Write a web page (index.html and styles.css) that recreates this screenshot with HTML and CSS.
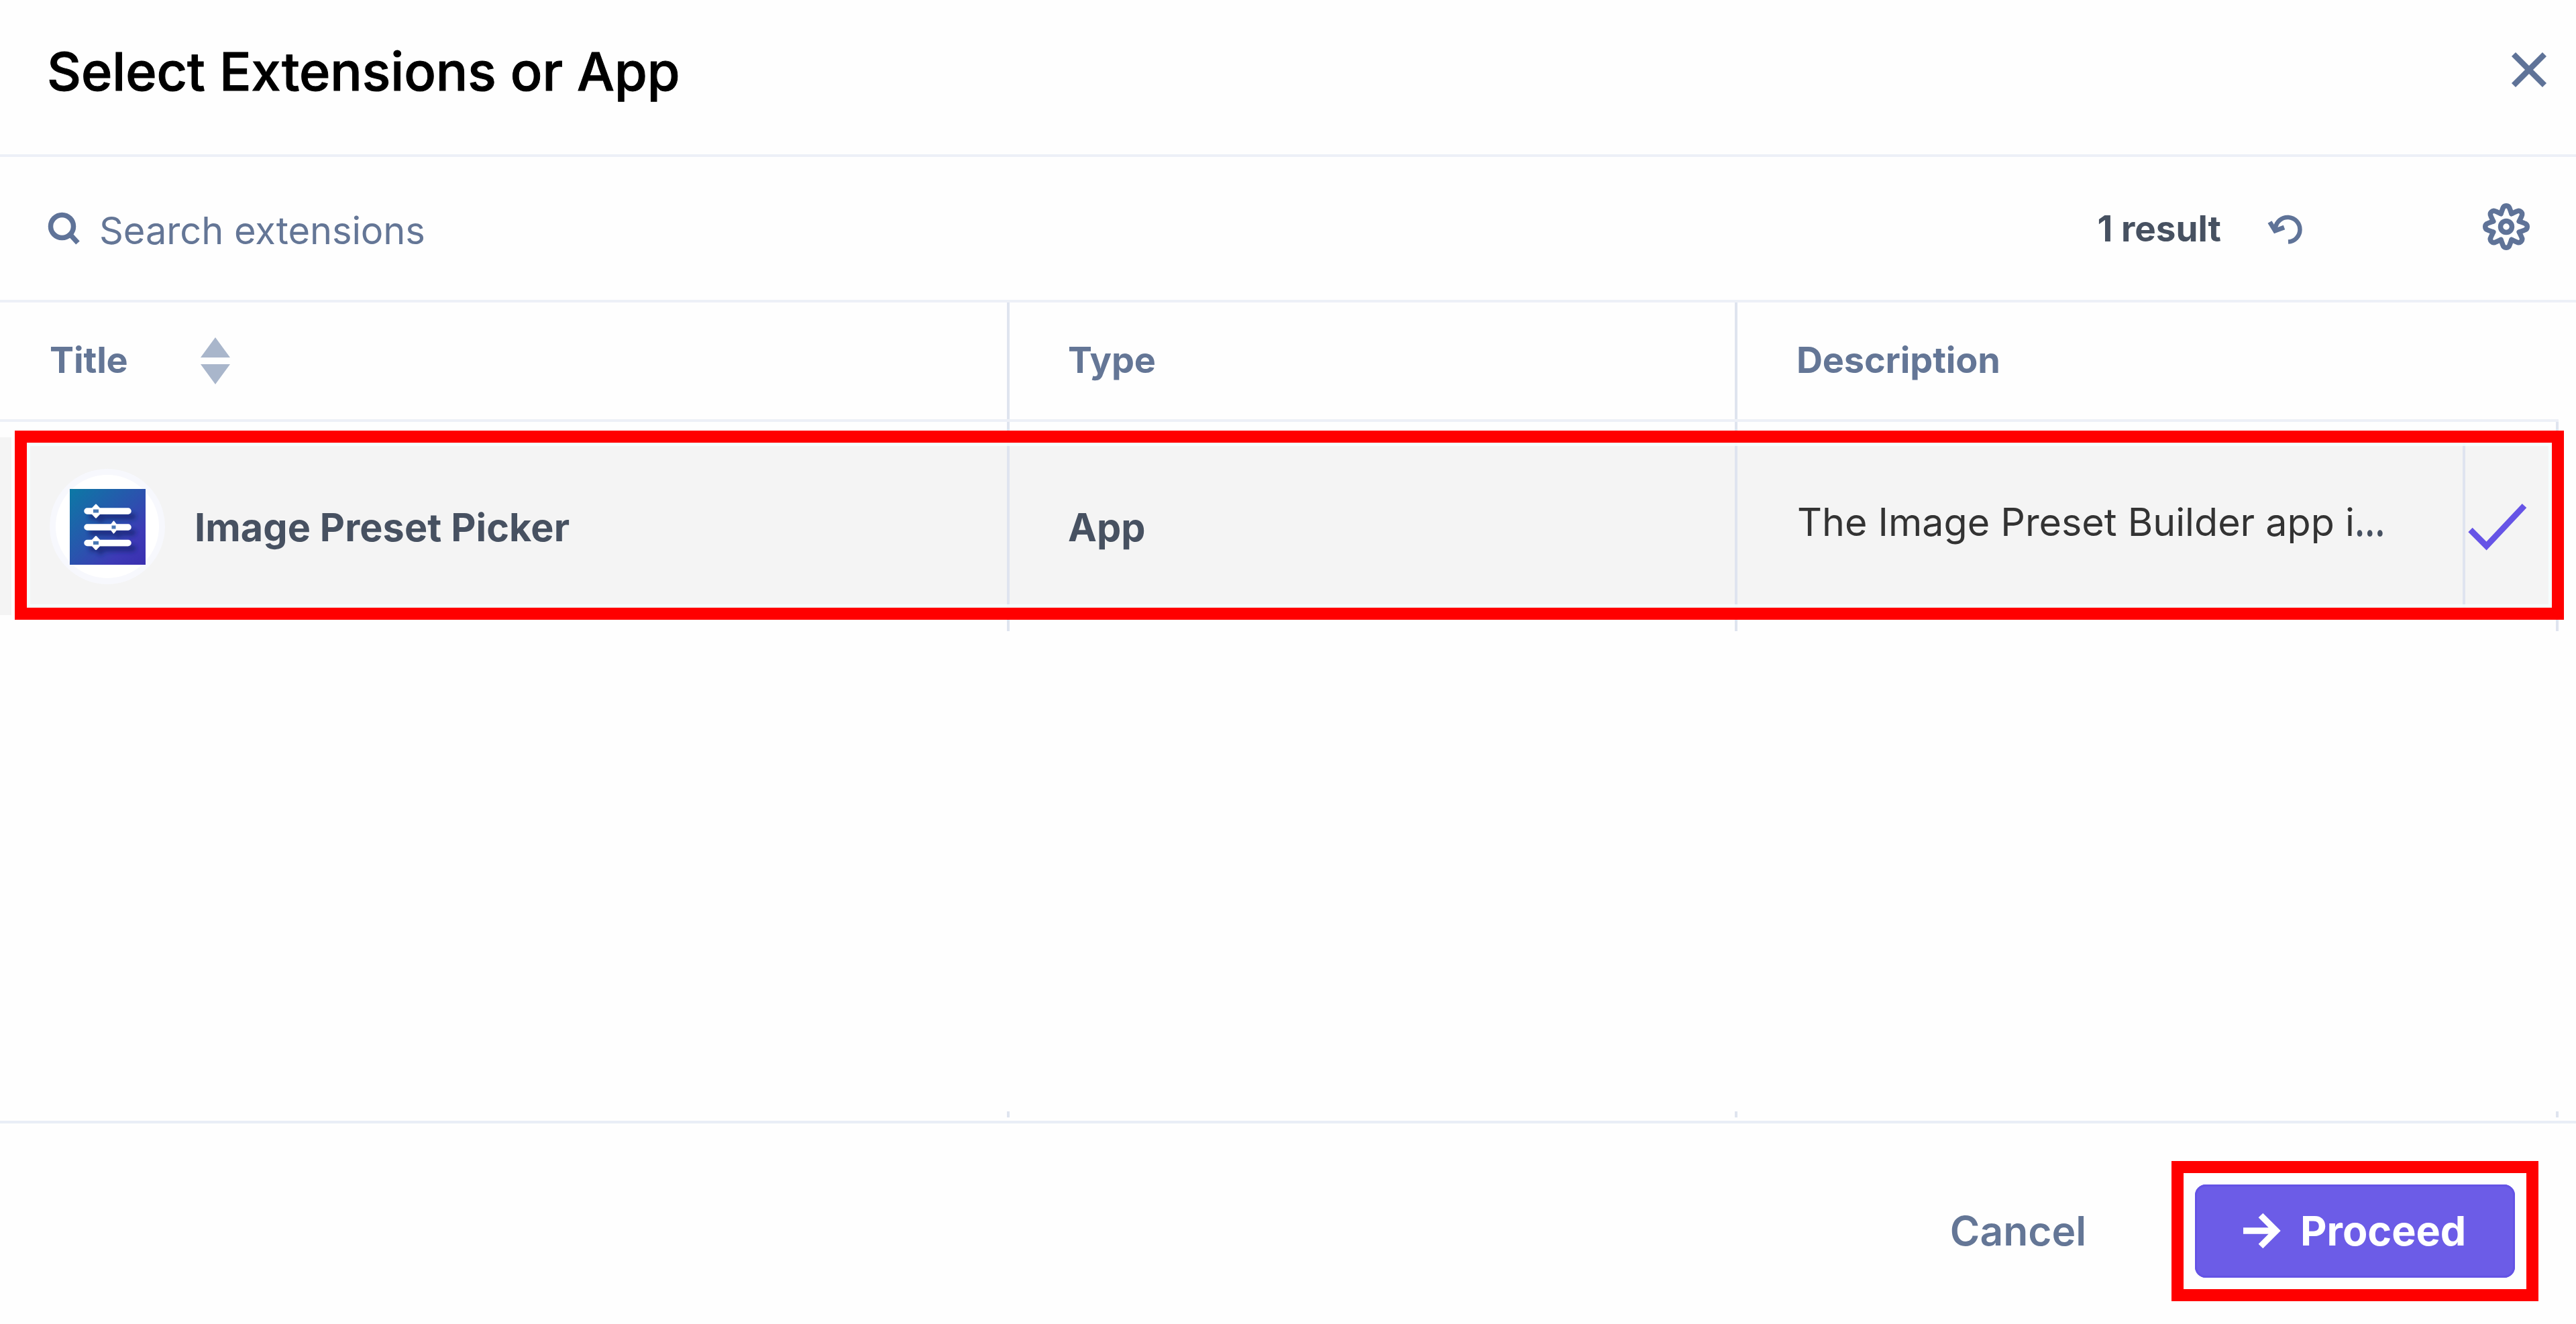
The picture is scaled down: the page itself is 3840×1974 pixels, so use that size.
FILE: index.html
```
<!DOCTYPE html>
<html lang="en">
<head>
<meta charset="utf-8">
<title>Select Extensions or App</title>
<link rel="stylesheet" href="styles.css">
</head>
<body>
<main class="modal">
  <header class="modal-header">
    <h1 class="modal-title">Select Extensions or App</h1>
    <svg class="icon icon-close" viewBox="0 0 54 54"><path d="M4 4 50 50M50 4 4 50"/></svg>
  </header>

  <section class="toolbar">
    <svg class="icon icon-search" viewBox="0 0 48 48"><circle cx="20.5" cy="20.5" r="17"/><path d="M32 32 44 45"/></svg>
    <span class="search-placeholder">Search extensions</span>
    <span class="result-count">1 result</span>
    <svg class="icon icon-undo" viewBox="0 0 52 46"><path d="M11 20A18.3 18.3 0 1 1 30 40.5"/><path class="undo-head" d="M2.500 11 10.500 24 24 19"/></svg>
    <svg class="icon icon-gear" viewBox="-35 -35 70 70">
      <defs><path id="tooth" d="M-8-19.400-5.200-27Q-4-31.300 0-31.300T5.200-27L8-19.400"/></defs>
      <use href="#tooth"/><use href="#tooth" transform="rotate(45)"/><use href="#tooth" transform="rotate(90)"/><use href="#tooth" transform="rotate(135)"/>
      <use href="#tooth" transform="rotate(180)"/><use href="#tooth" transform="rotate(225)"/><use href="#tooth" transform="rotate(270)"/><use href="#tooth" transform="rotate(315)"/>
      <circle r="8.500"/>
    </svg>
  </section>

  <section class="table">
    <div class="grid head">
      <div class="cell head-title"><span>Title</span>
        <svg class="icon-sort" viewBox="0 0 44 70"><path d="M22 0 44 30H0zM0 40H44L22 70z"/></svg>
      </div>
      <div class="cell">Type</div>
      <div class="cell head-description">Description</div>
    </div>

    <div class="grid row">
      <div class="cell cell-title">
        <span class="avatar">
          <svg class="app-logo" viewBox="0 0 113 113">
            <defs>
              <linearGradient id="logo-fill" x1="0" y1="0" x2="1" y2="1"><stop offset="0" stop-color="#0c79a5"/><stop offset=".5" stop-color="#2b52ae"/><stop offset=".75" stop-color="#3d3ab6"/><stop offset="1" stop-color="#3a2fb0"/></linearGradient>
              <filter id="logo-shadow" x="-20%" y="-20%" width="150%" height="150%"><feDropShadow dx="7" dy="8" stdDeviation="3" flood-color="#1f2577" flood-opacity=".8"/></filter>
            </defs>
            <path fill="url(#logo-fill)" d="M0 0H113V113H0z"/>
            <g filter="url(#logo-shadow)">
              <path class="slider-track" d="M26 33H87M26 57H87M26 80.500H87"/>
              <path class="slider-knob" d="M39 23.500 48 33 39 42.500 30 33zM65.500 48.500 72 57 65.500 65.500 59 57zM39 71 48 80.500 39 90 30 80.500z"/>
            </g>
            <path class="slider-hole" d="M35 33H43M62.500 57H68.500M35 80.500H43"/>
          </svg>
        </span>
        <span class="row-text">Image Preset Picker</span>
      </div>
      <div class="cell"><span class="row-text">App</span></div>
      <div class="cell cell-description"><span class="description">The Image Preset Builder app i</span><span class="ellipsis">…</span></div>
      <div class="cell cell-check"><div class="check-slot"><svg class="icon-check" viewBox="0 0 88 70"><path d="M3.500 40 27.500 64 84 4"/></svg></div></div>
      <div class="highlight highlight-row"></div>
    </div>

    <div class="grid tail"><div class="cell"></div><div class="cell"></div><div class="cell tail-wide"></div></div>
  </section>

  <footer class="modal-footer">
    <span class="cancel">Cancel</span>
    <div class="proceed">
      <svg class="icon-arrow" viewBox="0 0 54 54"><path d="M0 27H48M26 4 49 27 26 50"/></svg>
      <span>Proceed</span>
      <div class="highlight highlight-button"></div>
    </div>
  </footer>
</main>
</body>
</html>
```
FILE: styles.css
```
* { box-sizing: border-box; }

body {
  margin: 0;
  background: #fefefe;
  font-family: Inter, "Liberation Sans", sans-serif;
  color: #475161;
}

svg { display: block; flex: none; overflow: visible; }

.modal {
  display: flex;
  flex-direction: column;
  width: 3840px;
  height: 1974px;
  overflow: hidden;
  white-space: nowrap;
}

.icon { fill: none; stroke: #5f7398; stroke-width: 7.5; }

/* Header */
.modal-header {
  display: flex;
  align-items: center;
  justify-content: space-between;
  height: 234px;
  padding: 0 43px 22px 70px;
  border-bottom: 4px solid #edf0f7;
}

.modal-title {
  margin: 0;
  padding-top: 4px;
  font-size: 79px;
  font-weight: 500;
  line-height: 96px;
  letter-spacing: -.05px;
  color: #000;
  -webkit-text-stroke: 1px #000;
}

.icon-close { width: 54px; height: 54px; stroke-width: 8.5; }

/* Toolbar */
.toolbar {
  display: flex;
  align-items: center;
  height: 217px;
  padding: 0 69px 0 72px;
  border-bottom: 4px solid #edf0f7;
}

.icon-search { width: 48px; height: 48px; }

.search-placeholder {
  margin-left: 28px;
  padding-top: 6px;
  font-size: 56px;
  line-height: 68px;
  letter-spacing: -.1px;
  color: #647696;
}

.result-count {
  margin-left: auto;
  font-size: 53px;
  font-weight: 700;
  line-height: 64px;
}

.icon-undo { width: 52px; height: 46px; margin: 5px 0 0 70px; stroke-width: 6.5; }
.icon-undo .undo-head { stroke-width: 7; }
.icon-gear { width: 70px; height: 70px; margin: 0 0 5px 268px; stroke-width: 7.5; stroke-linecap: round; }

/* Table */
.table { flex: 1; display: flex; flex-direction: column; }

.grid {
  display: grid;
  grid-template-columns: 1505px 1085px 1085px 139px;
  width: 3814px;
}

.cell {
  display: flex;
  align-items: center;
  padding-left: 87px;
  border-right: 4px solid #dfe4ef;
}

.head {
  height: 178px;
  border-bottom: 4px solid #edf0f7;
  font-size: 54px;
  font-weight: 700;
  letter-spacing: -.15px;
  color: #647696;
}

.head-title { gap: 108px; padding-left: 74px; }
.head-description { grid-column: span 2; padding-left: 88px; border-right: 0; }
.head .cell { padding-bottom: 4px; }
.icon-sort { width: 44px; height: 70px; margin-top: 3px; fill: #a9b6cb; }

.row {
  position: relative;
  height: 312px;
  background: linear-gradient(#f4f4f4, #f4f4f4) 0 23px / 3814px 265px no-repeat;
}

.cell-title { gap: 44px; padding-left: 74px; }

.avatar {
  display: flex;
  align-items: center;
  justify-content: center;
  width: 172px;
  height: 172px;
  border: 9px solid #f7f8fd;
  border-radius: 50%;
  background: #fff;
}

.app-logo { width: 113px; height: 113px; }
.slider-track { fill: none; stroke: #fff; stroke-width: 9.5; stroke-linecap: round; }
.slider-knob { fill: #fff; stroke: #fff; stroke-width: 2; stroke-linejoin: round; }
.slider-hole { fill: none; stroke: #4a78b4; stroke-width: 5; }

.row-text { padding-top: 2px; font-size: 57.5px; font-weight: 700; line-height: 70px; letter-spacing: .1px; }

.cell-description { padding: 0 0 15px 89px; border-right: 0; }
.description { font-size: 57.4px; line-height: 70px; color: #333; }
.ellipsis { font-size: 57.4px; font-weight: 700; line-height: 70px; transform: scaleX(.79); transform-origin: left; }

.cell-check { padding-left: 0; }
.check-slot {
  display: flex;
  align-items: center;
  width: 100%;
  height: 265px;
  margin-left: -4px;
  padding-left: 4px;
  border-left: 4px solid #dfe4ef;
}
.icon-check { width: 88px; height: 70px; fill: none; stroke: #6654e6; stroke-width: 9; }

.tail { height: 9px; margin: auto 0 5px; }
.tail-wide { grid-column: span 2; }

/* Footer */
.modal-footer {
  display: flex;
  align-items: center;
  justify-content: flex-end;
  gap: 162px;
  height: 303px;
  padding: 21px 91px 0 0;
  border-top: 4px solid #e9eef6;
}

.cancel { font-size: 60.5px; font-weight: 600; line-height: 74px; color: #647696; }

.proceed {
  position: relative;
  display: flex;
  align-items: center;
  gap: 31px;
  width: 477px;
  height: 139px;
  padding-left: 72px;
  border-radius: 16px;
  background: #6c5ce7;
  box-shadow: inset 0 0 0 3px #6453e5;
  color: #fff;
  font-size: 61px;
  font-weight: 700;
}

.icon-arrow { width: 54px; height: 54px; fill: none; stroke: #fff; stroke-width: 9.5; }

/* Red callout frames */
.highlight { position: absolute; border: 18px solid #f00; }
.highlight-row {
  left: 22px;
  top: 13px;
  width: 3800px;
  height: 282px;
  box-shadow: -5px 0 #fff, inset 0 0 0 5px rgba(244, 255, 255, .85);
}
.highlight-button { inset: -35px; }
```
